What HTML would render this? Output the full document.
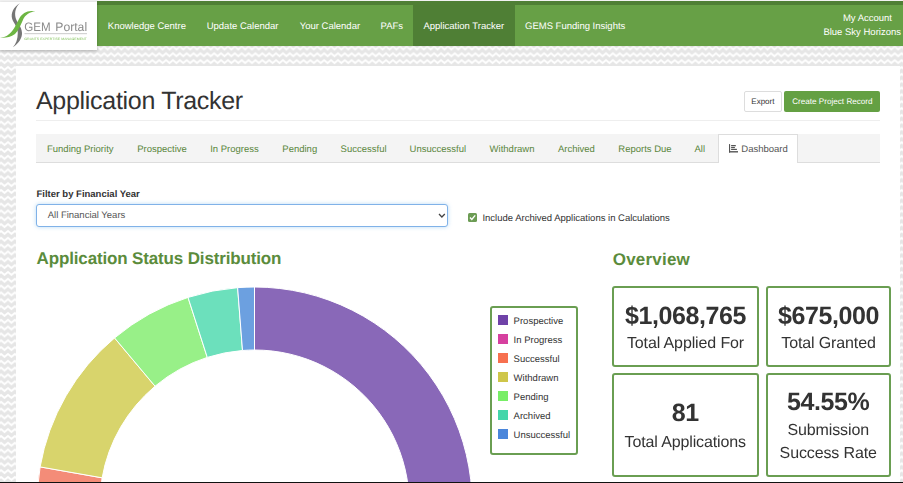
<!DOCTYPE html>
<html><head><meta charset="utf-8">
<style>
*{box-sizing:border-box;margin:0;padding:0}
html,body{width:903px;height:483px;overflow:hidden}
body{position:relative;font-family:"Liberation Sans",sans-serif;color:#333;text-rendering:geometricPrecision;
background-color:#fff}
.a{position:absolute;white-space:nowrap;line-height:1}
#topstrip{position:absolute;left:0;top:0;width:903px;height:2px;background:#f2f2f2}
#nav{position:absolute;left:97px;top:1px;width:806px;height:45px;background:#67a046}
#navtop{position:absolute;left:97px;top:1px;width:806px;height:4px;background:#4f7f35}
#navshadow{position:absolute;left:0;top:46px;width:903px;height:3px;background:linear-gradient(rgba(0,0,0,0.05),rgba(0,0,0,0))}
#active{position:absolute;left:413px;top:1px;width:102px;height:45px;background:#4f7f35}
.nv{position:absolute;white-space:nowrap;line-height:1;font-size:9.5px;color:#fff}
#logo{position:absolute;left:0;top:2px;width:97px;height:48px;background:#fff;box-shadow:0 1px 3px rgba(0,0,0,0.25)}
#panel{position:absolute;left:16px;top:66px;width:884px;height:420px;background:#fff}
.tab{position:absolute;white-space:nowrap;line-height:1;font-size:9.5px;color:#5a863c}
.box{position:absolute;border:2px solid #6a9e52;border-radius:3px;background:#fff}
.num{position:absolute;white-space:nowrap;line-height:1;font-weight:bold;font-size:25px;letter-spacing:-0.4px;text-align:center;color:#333}
.lbl{position:absolute;white-space:nowrap;line-height:1;font-size:16px;letter-spacing:-0.12px;text-align:center;color:#333}
.lg{position:absolute;white-space:nowrap;line-height:1;font-size:9.5px;color:#333}
.sw{position:absolute;width:10px;height:10px}
</style></head>
<body>
<svg class="a" style="left:0;top:0" width="903" height="483"><defs><pattern id="zz" patternUnits="userSpaceOnUse" x="1.1" y="5.53" width="6.874" height="6.833"><rect width="6.874" height="6.833" fill="#e6e6e6"/><polyline points="-3.437,2.9 0,0 3.437,2.9 6.874,0 10.311,2.9" fill="none" stroke="#fff" stroke-width="2"/><polyline points="-3.437,9.733 0,6.833 3.437,9.733 6.874,6.833 10.311,9.733" fill="none" stroke="#fff" stroke-width="2"/></pattern></defs><rect width="903" height="483" fill="url(#zz)"/></svg>
<div id="topstrip"></div>
<div id="navshadow"></div>
<div id="nav"></div>
<div id="navtop"></div>
<div id="active"></div>
<div id="logo">
<svg width="97" height="48" viewBox="0 2 97 48" style="position:absolute;left:0;top:0;will-change:transform">
<path d="M19.9,3.2 C13.5,7 10.5,13 12.2,19 C13.8,23.5 17.8,27 17.8,33 C17.8,39 16,44 12.9,47.3 C19,43 22.2,38 22,33 C21.8,27 17.5,23 16,19 C14.5,14.5 14.5,8 19.9,3.2 Z" fill="#767676"/>
<path d="M35.5,11.6 C28.5,9.8 22.5,12.5 19,19 C15.5,25.5 13.5,31.5 7,35.8 C4,37.3 1.5,37.6 0,37.6 C4,38.2 10.5,37.5 15,34 C18.8,30.5 20.3,25.5 22.7,20.5 C25.5,14.5 29,12.3 35.5,11.6 Z" fill="#6db543"/>
<text x="24.3" y="31.1" font-family="Liberation Sans" font-size="12.3" fill="#8a8a8a" textLength="26.4" lengthAdjust="spacingAndGlyphs">GEM</text>
<text x="55.3" y="31.1" font-family="Liberation Sans" font-size="12.3" fill="#8a8a8a" textLength="31.8" lengthAdjust="spacingAndGlyphs">Portal</text>
<rect x="24.5" y="33" width="62.5" height="1.2" fill="#d3d3d3"/>
<text x="24.3" y="39.8" font-family="Liberation Sans" font-size="3.3" fill="#86c460" textLength="62.5" lengthAdjust="spacingAndGlyphs">GRANTS EXPERTISE MANAGEMENT</text>
</svg>
</div>
<div class="nv" style="left:107.8px;top:21.7px">Knowledge Centre</div>
<div class="nv" style="left:206.7px;top:21.7px">Update Calendar</div>
<div class="nv" style="left:299.7px;top:21.7px">Your Calendar</div>
<div class="nv" style="left:380.6px;top:21.7px">PAFs</div>
<div class="nv" style="left:423.4px;top:21.7px">Application Tracker</div>
<div class="nv" style="left:525px;top:21.7px">GEMS Funding Insights</div>
<div class="nv" style="right:11px;top:14.3px">My Account</div>
<div class="nv" style="right:2px;top:27.7px">Blue Sky Horizons</div>

<div id="panel"></div>

<div class="a" style="left:36px;top:89px;font-size:25px;letter-spacing:-0.3px;color:#333">Application Tracker</div>
<div class="a" style="left:36px;top:120px;width:844px;height:1px;background:#eee"></div>
<div class="a" style="left:744px;top:91px;width:38px;height:21px;border:1px solid #ddd;border-radius:2px;background:#fff"></div>
<div class="a" style="left:751.3px;top:97.9px;font-size:8px;color:#333">Export</div>
<div class="a" style="left:784px;top:91px;width:96px;height:21px;border-radius:2px;background:#64a043"></div>
<div class="a" style="left:792.2px;top:97.9px;font-size:8.14px;color:#fff">Create Project Record</div>

<div class="a" style="left:36px;top:134px;width:844px;height:29px;background:#f4f4f4;border-bottom:1px solid #ddd"></div>
<div class="tab" style="left:47px;top:145.4px">Funding Priority</div>
<div class="tab" style="left:137.2px;top:145.4px">Prospective</div>
<div class="tab" style="left:210.2px;top:145.4px">In Progress</div>
<div class="tab" style="left:282.3px;top:145.4px">Pending</div>
<div class="tab" style="left:340.6px;top:145.4px">Successful</div>
<div class="tab" style="left:409.6px;top:145.4px">Unsuccessful</div>
<div class="tab" style="left:489.6px;top:145.4px">Withdrawn</div>
<div class="tab" style="left:557.9px;top:145.4px">Archived</div>
<div class="tab" style="left:618.3px;top:145.4px">Reports Due</div>
<div class="tab" style="left:694.5px;top:145.4px">All</div>
<div class="a" style="left:718px;top:134px;width:80px;height:29px;background:#fff;border:1px solid #ddd;border-bottom:none"></div>
<svg class="a" style="left:728px;top:143px" width="10" height="10" viewBox="0 0 10 10" fill="#555">
<rect x="1" y="1.1" width="1.1" height="8.5"/>
<rect x="1" y="8.1" width="9" height="1.4"/>
<rect x="3.1" y="2" width="4.7" height="1.3"/>
<rect x="3.1" y="4" width="3.8" height="1.1"/>
<rect x="3.1" y="5.8" width="5.8" height="1.2"/>
</svg>
<div class="a" style="left:741.3px;top:145.4px;font-size:9.5px;color:#555">Dashboard</div>

<div class="a" style="left:36.5px;top:190.1px;font-size:9.5px;font-weight:bold;color:#333">Filter by Financial Year</div>
<div class="a" style="left:36px;top:204px;width:412px;height:22.5px;border:1px solid #80b2e8;border-radius:3px;box-shadow:0 0 4px rgba(102,175,233,0.45);background:#fff"></div>
<div class="a" style="left:47.7px;top:210.5px;font-size:9.5px;color:#555">All Financial Years</div>
<svg class="a" style="left:438px;top:213px" width="8" height="6" viewBox="0 0 8 6"><path d="M1,1 L3.9,4 L6.8,1" fill="none" stroke="#444" stroke-width="1.3"/></svg>
<div class="a" style="left:468px;top:213px;width:9px;height:9px;background:#6c9c54;border-radius:1.5px"></div>
<svg class="a" style="left:468px;top:213px" width="9" height="9" viewBox="0 0 9 9"><path d="M2,4.6 L3.8,6.5 L7.2,2.4" fill="none" stroke="#fff" stroke-width="1.4"/></svg>
<div class="a" style="left:482.4px;top:214.3px;font-size:9.5px;color:#333">Include Archived Applications in Calculations</div>

<div class="a" style="left:36.6px;top:250px;font-size:17px;font-weight:bold;letter-spacing:-0.15px;color:#5b8c3c">Application Status Distribution</div>
<div class="a" style="left:612.8px;top:250.5px;font-size:17px;font-weight:bold;letter-spacing:0.2px;color:#5b8c3c">Overview</div>

<svg class="a" style="left:0;top:0" width="903" height="483" viewBox="0 0 903 483">
<g stroke="#fff" stroke-width="1">
<path fill="#8968b8" d="M254.50,287.00 A217.7,217.7 0 1 1 134.87,686.59 L169.49,633.95 A154.7,154.7 0 1 0 254.50,350.00 Z"/>
<path fill="#e06cb4" d="M134.87,686.59 A217.7,217.7 0 0 1 96.15,654.09 L141.98,610.86 A154.7,154.7 0 0 0 169.49,633.95 Z"/>
<path fill="#f48c78" d="M96.15,654.09 A217.7,217.7 0 0 1 40.11,466.90 L102.15,477.84 A154.7,154.7 0 0 0 141.98,610.86 Z"/>
<path fill="#d8d46c" d="M40.11,466.90 A217.7,217.7 0 0 1 114.57,337.93 L155.06,386.19 A154.7,154.7 0 0 0 102.15,477.84 Z"/>
<path fill="#98f088" d="M114.57,337.93 A217.7,217.7 0 0 1 188.03,297.40 L207.27,357.39 A154.7,154.7 0 0 0 155.06,386.19 Z"/>
<path fill="#6ce0bc" d="M188.03,297.40 A217.7,217.7 0 0 1 237.63,287.65 L242.51,350.47 A154.7,154.7 0 0 0 207.27,357.39 Z"/>
<path fill="#6ca0e0" d="M237.63,287.65 A217.7,217.7 0 0 1 254.50,287.00 L254.50,350.00 A154.7,154.7 0 0 0 242.51,350.47 Z"/>
</g>
</svg>

<div class="box" style="left:489.6px;top:305.8px;width:88px;height:149px"></div>
<div class="sw" style="left:498px;top:315px;background:#6f42a8"></div>
<div class="sw" style="left:498px;top:334px;background:#d6409f"></div>
<div class="sw" style="left:498px;top:353px;background:#f7704f"></div>
<div class="sw" style="left:498px;top:372px;background:#cfc64a"></div>
<div class="sw" style="left:498px;top:391px;background:#78ee66"></div>
<div class="sw" style="left:498px;top:410px;background:#44d6aa"></div>
<div class="sw" style="left:498px;top:429px;background:#4a86db"></div>
<div class="lg" style="left:513.6px;top:316.7px">Prospective</div>
<div class="lg" style="left:513.6px;top:335.7px">In Progress</div>
<div class="lg" style="left:513.6px;top:354.7px">Successful</div>
<div class="lg" style="left:513.6px;top:373.7px">Withdrawn</div>
<div class="lg" style="left:513.6px;top:392.7px">Pending</div>
<div class="lg" style="left:513.6px;top:411.7px">Archived</div>
<div class="lg" style="left:513.6px;top:430.7px">Unsuccessful</div>

<div class="box" style="left:612px;top:286px;width:147px;height:81px"></div>
<div class="box" style="left:765.5px;top:286px;width:125.5px;height:81px"></div>
<div class="box" style="left:612px;top:373px;width:147px;height:103.5px"></div>
<div class="box" style="left:765.5px;top:373px;width:125.5px;height:103.5px"></div>
<div class="num" style="left:612px;width:147px;top:303.7px">$1,068,765</div>
<div class="lbl" style="left:612px;width:147px;top:336px">Total Applied For</div>
<div class="num" style="left:766px;width:125px;top:303.7px">$675,000</div>
<div class="lbl" style="left:766px;width:125px;top:336px">Total Granted</div>
<div class="num" style="left:612px;width:146.5px;top:401.4px">81</div>
<div class="lbl" style="left:612px;width:146.5px;top:435px">Total Applications</div>
<div class="num" style="left:766px;width:124.5px;top:390.4px">54.55%</div>
<div class="lbl" style="left:766px;width:124.5px;top:423px">Submission</div>
<div class="lbl" style="left:766px;width:124.5px;top:445.5px">Success Rate</div>

<div class="a" style="left:0;top:482px;width:903px;height:1px;background:#111"></div>
</body></html>
